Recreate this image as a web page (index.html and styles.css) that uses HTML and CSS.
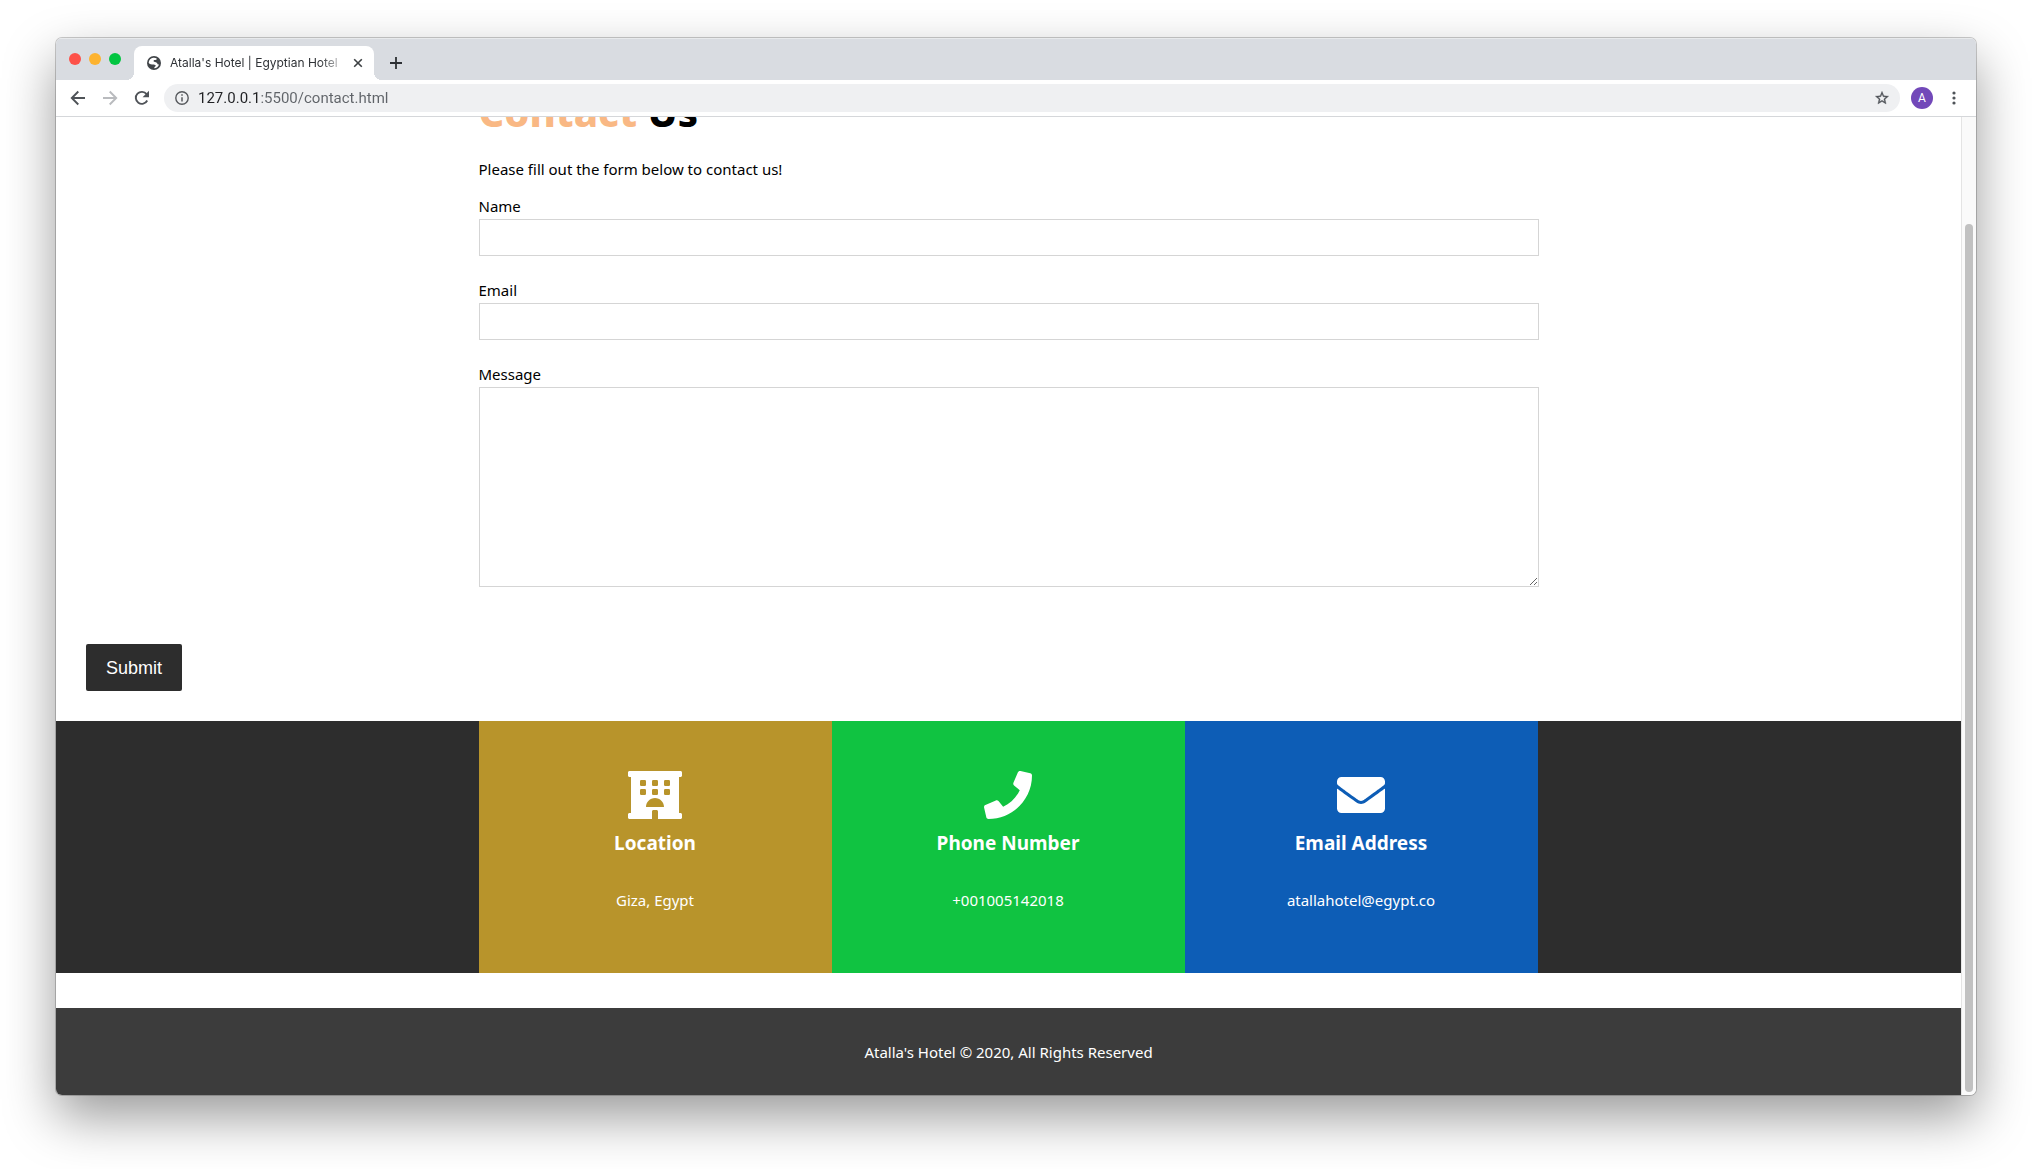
FILE: index.html
```html
<!DOCTYPE html>
<html lang="en">
<head>
  <meta charset="utf-8">
  <meta name="viewport" content="width=device-width, initial-scale=1">
  <title>Atalla's Hotel | Egyptian Hotel | Contact</title>
  <link rel="stylesheet" href="styles.css">
</head>
<body>
  <div class="window">
    <header class="tabstrip">
      <div class="lights">
        <span class="light light-close"></span>
        <span class="light light-min"></span>
        <span class="light light-max"></span>
      </div>
      <div class="tab">
        <svg class="icon-small" viewBox="0 0 24 24" aria-hidden="true"><circle cx="12" cy="12" r="12" fill="#414549"/><path d="M11 3c2.500-.2 4.500.5 6 1.800-.6 1.800-2 2.200-4 2.200-1.200 0-1.600.5-1.600 1.400 0 1 .8 1.500 2.200 1.700 2.600.4 4.200 1.400 4.200 3.300 0 1 .8 1.300 2.800 1-1.200 3.800-4.400 6.300-8.300 6.500.3-1.400.9-2.600 2.200-3.400.7-.5.6-1.700-.4-2.200-1.400-.7-3.400-.6-5.600-.8-2.600-.2-4.600-1.200-5.600-3C3.300 7 6.500 3.500 11 3z" fill="#fff"/></svg>
        <span class="tab-title">Atalla's Hotel | Egyptian Hotel |</span>
        <button class="icon-button" type="button" aria-label="Close tab">
          <svg class="icon-tiny" viewBox="0 0 10 10"><path d="M1.200 1.200l7.600 7.600M8.800 1.200L1.200 8.800" stroke="#3c4043" stroke-width="1.600"/></svg>
        </button>
      </div>
      <button class="icon-button new-tab" type="button" aria-label="New tab">
        <svg class="icon-plus" viewBox="0 0 12 12"><path d="M6 0v12M0 6h12" stroke="#2d3034" stroke-width="1.800"/></svg>
      </button>
    </header>

    <nav class="toolbar" aria-label="Browser">
      <div class="nav-buttons">
        <button class="icon-button" type="button" aria-label="Back">
          <svg class="icon" viewBox="0 0 16 16" fill="none" stroke="#4f5358" stroke-width="1.900"><path d="M15 8H2.200M8.300 1.500L1.800 8l6.500 6.500"/></svg>
        </button>
        <button class="icon-button" type="button" aria-label="Forward">
          <svg class="icon" viewBox="0 0 16 16" fill="none" stroke="#b9bbbe" stroke-width="1.900"><path d="M1 8h12.800M7.700 1.500L14.200 8l-6.500 6.500"/></svg>
        </button>
        <button class="icon-button" type="button" aria-label="Reload">
          <svg class="icon" viewBox="0 0 16 16"><path d="M13.200 10.500A6 6 0 1 1 12.600 4.200" fill="none" stroke="#4f5358" stroke-width="1.900"/><path d="M15 .8v6.400H8.600z" fill="#4f5358"/></svg>
        </button>
      </div>
      <div class="address">
        <svg class="icon-small" viewBox="0 0 14 14"><circle cx="7" cy="7" r="6.200" fill="none" stroke="#56595d" stroke-width="1.400"/><path d="M7 6.200v4.400M7 3.300v1.500" stroke="#56595d" stroke-width="1.500"/></svg>
        <input class="address-input" type="text" aria-label="Address" value="127.0.0.1:5500/contact.html">
        <button class="icon-button" type="button" aria-label="Bookmark this page">
          <svg class="icon" viewBox="0 0 24 24"><path d="M22 9.240l-7.190-.62L12 2 9.190 8.630 2 9.240l5.460 4.730L5.820 21 12 17.270 18.180 21l-1.630-7.030L22 9.240zM12 15.400l-3.760 2.270 1-4.280-3.320-2.880 4.380-.38L12 6.100l1.710 4.040 4.380.38-3.320 2.880 1 4.280L12 15.400z" fill="#4f5358" stroke="#4f5358" stroke-width=".5"/></svg>
        </button>
      </div>
      <button class="avatar" type="button" aria-label="Profile">A</button>
      <button class="icon-button" type="button" aria-label="Menu">
        <svg class="icon" viewBox="0 0 16 16" fill="#4f5358"><circle cx="8" cy="3" r="1.600"/><circle cx="8" cy="8" r="1.600"/><circle cx="8" cy="13" r="1.600"/></svg>
      </button>
    </nav>

    <div class="viewport">
      <main class="page">
        <section class="contact">
          <form class="contact-form">
            <div class="container">
              <h1 class="title"><span class="title-accent">Contact</span> Us</h1>
              <p class="intro">Please fill out the form below to contact us!</p>
              <div class="field">
                <label for="name">Name</label>
                <input class="control" id="name" name="name" type="text">
              </div>
              <div class="field">
                <label for="email">Email</label>
                <input class="control" id="email" name="email" type="email">
              </div>
              <div class="field">
                <label for="message">Message</label>
                <textarea class="control message" id="message" name="message"></textarea>
              </div>
            </div>
            <button class="submit" type="submit">Submit</button>
          </form>
        </section>

        <section class="info">
          <div class="container cards">
            <article class="card card-location">
              <svg class="card-icon" viewBox="0 0 576 512" aria-hidden="true"><path fill="#fff" fill-rule="evenodd" d="M560 64c8.840 0 16-7.160 16-16V16c0-8.840-7.160-16-16-16H16C7.160 0 0 7.160 0 16v32c0 8.840 7.160 16 16 16h16v384H16c-8.840 0-16 7.160-16 16v32c0 8.840 7.160 16 16 16h240v-80c0-8.800 7.200-16 16-16h32c8.800 0 16 7.200 16 16v80h240c8.840 0 16-7.160 16-16v-32c0-8.840-7.160-16-16-16h-16V64h16zM192 384c0-53 43-96 96-96s96 43 96 96z"/><g fill="#b8942b"><rect x="128" y="96" width="64" height="64" rx="13"/><rect x="256" y="96" width="64" height="64" rx="13"/><rect x="384" y="96" width="64" height="64" rx="13"/><rect x="128" y="192" width="64" height="64" rx="13"/><rect x="256" y="192" width="64" height="64" rx="13"/><rect x="384" y="192" width="64" height="64" rx="13"/></g></svg>
              <h3 class="card-title">Location</h3>
              <p class="card-text">Giza, Egypt</p>
            </article>
            <article class="card card-phone">
              <svg class="card-icon" viewBox="0 0 512 512" aria-hidden="true"><path fill="#fff" d="M493.400 24.600l-104-24c-11.300-2.600-22.900 3.300-27.500 13.900l-48 112c-4.200 9.800-1.400 21.300 6.900 28l60.600 49.600c-36 76.700-98.900 140.500-177.200 177.200l-49.600-60.600c-6.800-8.300-18.200-11.100-28-6.900l-112 48C3.900 366.500-2 378.100.6 389.400l24 104C27.100 504.200 36.700 512 48 512c256.100 0 464-207.500 464-464 0-11.200-7.700-20.900-18.600-23.400z"/></svg>
              <h3 class="card-title">Phone Number</h3>
              <p class="card-text">+001005142018</p>
            </article>
            <article class="card card-email">
              <svg class="card-icon" viewBox="0 0 512 512" aria-hidden="true"><path fill="#fff" d="M502.300 190.800c3.900-3.100 9.700-.2 9.700 4.700V400c0 26.500-21.500 48-48 48H48c-26.500 0-48-21.500-48-48V195.600c0-5 5.700-7.800 9.700-4.700 22.400 17.400 52.100 39.500 154.100 113.600 21.100 15.400 56.700 47.800 92.200 47.600 35.700.3 72-32.800 92.300-47.600 102-74.100 131.600-96.300 154-113.700zM256 320c23.200.4 56.600-29.200 73.400-41.400 132.700-96.300 142.800-104.700 173.400-128.700 5.800-4.500 9.200-11.500 9.200-18.900v-19c0-26.500-21.500-48-48-48H48c-26.500 0-48 21.500-48 48v19c0 7.400 3.400 14.300 9.200 18.900 30.600 23.900 40.700 32.400 173.400 128.700 16.800 12.200 50.200 41.800 73.400 41.400z"/></svg>
              <h3 class="card-title">Email Address</h3>
              <p class="card-text">atallahotel@egypt.co</p>
            </article>
          </div>
        </section>

        <footer class="footer">
          <p>Atalla's Hotel © 2020, All Rights Reserved</p>
        </footer>
      </main>
      <div class="scrollbar"><div class="thumb"></div></div>
    </div>
  </div>
</body>
</html>
```

FILE: styles.css
```css
* {
  box-sizing: border-box;
  margin: 0;
  padding: 0;
}

body {
  min-height: 100vh;
  padding: 38px 56px 74px;
  background: #fff;
  color: #000;
  font-family: "Noto Sans", "DejaVu Sans Condensed", sans-serif;
  font-size: 15px;
  line-height: 26px;
  overflow: hidden;
}

button,
input,
textarea {
  border: 0;
  background: none;
  font: inherit;
}

svg {
  display: block;
}

/* Browser window */

.window {
  display: flex;
  flex-direction: column;
  height: calc(100vh - 112px);
  border-radius: 6px;
  background: #fff;
  box-shadow: 0 0 0 1px rgba(0, 0, 0, 0.2), 0 22px 52px rgba(0, 0, 0, 0.4);
  overflow: hidden;
}

.tabstrip {
  display: flex;
  flex: none;
  align-items: flex-end;
  height: 42px;
  padding: 0 13px;
  border-top: 1px solid #e8eaec;
  background: #d9dce1;
}

.lights {
  display: flex;
  gap: 8px;
  padding-bottom: 15px;
}

.light {
  width: 12px;
  height: 12px;
  border-radius: 50%;
}

.light-close { background: #fd5149; }
.light-min { background: #fdb32f; }
.light-max { background: #02c541; }

.tab {
  position: relative;
  display: flex;
  align-items: center;
  gap: 9px;
  width: 240px;
  height: 34px;
  margin-left: 13px;
  padding: 0 8px 0 13px;
  border-radius: 8px 8px 0 0;
  background: #fff;
}

.tab::before,
.tab::after {
  content: "";
  position: absolute;
  bottom: 0;
  width: 8px;
  height: 8px;
}

.tab::before {
  right: 100%;
  background: radial-gradient(circle at 0 0, transparent 8px, #fff 8px);
}

.tab::after {
  left: 100%;
  background: radial-gradient(circle at 100% 0, transparent 8px, #fff 8px);
}

.tab-title {
  flex: 1;
  min-width: 0;
  color: #2f3236;
  font-family: Inter, sans-serif;
  font-size: 12px;
  white-space: nowrap;
  mask-image: linear-gradient(90deg, #000 150px, transparent 178px);
}

.icon-button {
  display: flex;
  flex: none;
  align-items: center;
  justify-content: center;
  width: 16px;
  height: 16px;
}

.new-tab {
  margin: 0 0 9px 14px;
}

.icon { width: 16px; height: 16px; }
.icon-small { flex: none; width: 14px; height: 14px; }
.icon-tiny { width: 10px; height: 10px; }
.icon-plus { width: 12px; height: 12px; }

.toolbar {
  display: flex;
  flex: none;
  align-items: center;
  height: 37px;
  padding: 0 14px;
  border-bottom: 1px solid #d5d7da;
  background: #fff;
}

.nav-buttons {
  display: flex;
  gap: 16px;
}

.address {
  display: flex;
  flex: 1;
  align-items: center;
  gap: 9px;
  height: 28px;
  margin: 0 11px 0 14px;
  padding: 0 10px 0 11px;
  border-radius: 14px;
  background: #eff0f2;
}

.address-input {
  flex: 1;
  min-width: 0;
  color: transparent;
  background: linear-gradient(90deg, #202124 61px, #5f6368 61px);
  background-clip: text;
  font-family: Roboto, sans-serif;
  font-size: 15px;
  outline: none;
}

.avatar {
  width: 22px;
  height: 22px;
  margin-right: 13px;
  border-radius: 50%;
  background: #7248b9;
  color: #fff;
  font-family: Roboto, sans-serif;
  font-size: 12px;
  line-height: 22px;
}

/* Scrolled page: the content is anchored to its end */

.viewport {
  display: flex;
  flex: 1;
  min-height: 0;
}

.page {
  display: flex;
  flex: 1;
  flex-direction: column;
  justify-content: flex-end;
  min-width: 0;
  overflow: hidden;
}

.scrollbar {
  display: flex;
  width: 15px;
  padding: 107px 3px 3px;
  border-left: 1px solid #e4e4e4;
  background: #fafafa;
}

.thumb {
  flex: 1;
  max-width: 8px;
  border-radius: 4px;
  background: #c1c1c1;
}

/* Contact form */

.container {
  width: 100%;
  max-width: 1100px;
  margin: 0 auto;
  padding: 0 20px;
}

.title {
  padding-bottom: 14px;
  font-size: 40px;
  font-weight: 800;
  line-height: 60px;
}

.title-accent {
  color: #f9b884;
}

.intro {
  padding-bottom: 11px;
}

.field {
  display: flex;
  flex-direction: column;
  margin-bottom: 21px;
}

.control {
  width: 100%;
  height: 37px;
  padding: 8px;
  border: 1px solid #d5d5d5;
  background: #fff;
}

.message {
  height: 200px;
  resize: both;
}

.submit {
  display: block;
  width: 96px;
  height: 47px;
  margin: 57px 30px 30px;
  border-radius: 2px;
  background: #2d2d2d;
  color: #fff;
  font-family: "Liberation Sans", sans-serif;
  font-size: 18px;
}

/* Contact details */

.info {
  margin-bottom: 35px;
  background: #2d2d2d;
}

.cards {
  display: grid;
  grid-template-columns: repeat(3, minmax(0, 353px));
}

.card {
  display: flex;
  flex-direction: column;
  align-items: center;
  padding: 50px 20px 60px;
  color: #fff;
}

.card-location { background: #b8942b; }
.card-phone { background: #10c341; }
.card-email { background: #0d5db6; }

.card-icon {
  height: 48px;
}

.card-title {
  padding: 8px 0 28px;
  font-size: 19px;
  line-height: 32px;
}

.footer {
  padding: 31px 30px 30px;
  background: #3c3c3c;
  color: #fff;
  text-align: center;
}
```
